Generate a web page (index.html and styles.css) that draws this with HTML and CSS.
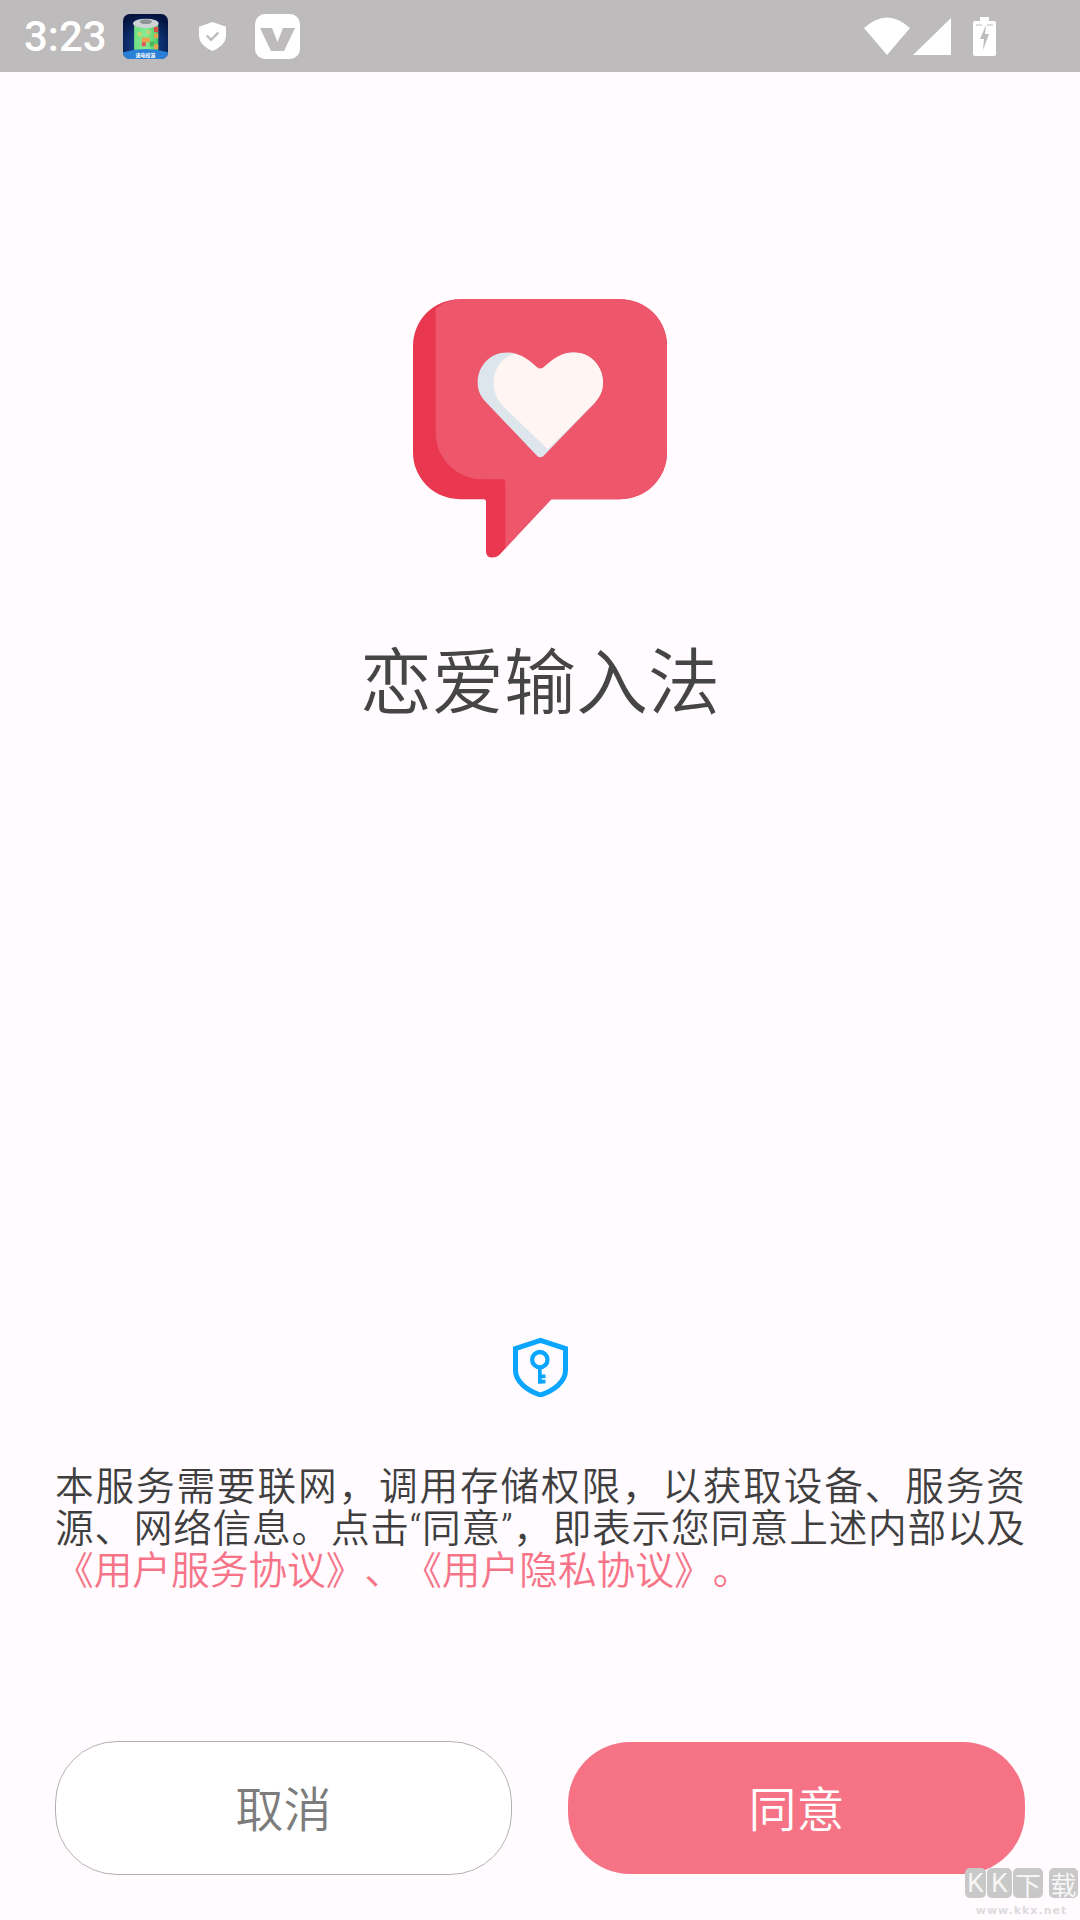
FILE: index.html
```html
<!DOCTYPE html>
<html lang="zh">
<head>
<meta charset="utf-8">
<title>恋爱输入法</title>
<link rel="stylesheet" href="styles.css">
</head>
<body>
<div class="screen">
  <header class="status">
    <span class="time">3:23</span>
    <svg class="ic-app" viewBox="370 38 134 134">
      <defs>
        <radialGradient id="bg" cx="50%" cy="70%" r="70%"><stop offset="0" stop-color="#1a4fa8"/><stop offset="1" stop-color="#04143f"/></radialGradient>
        <linearGradient id="can" x1="0" x2="1"><stop offset="0" stop-color="#6fdc80"/><stop offset=".5" stop-color="#86ec94"/><stop offset="1" stop-color="#4cc765"/></linearGradient>
        <clipPath id="appclip"><rect x="370" y="38" width="134" height="134" rx="20"/></clipPath>
      </defs>
      <g clip-path="url(#appclip)">
        <rect x="370" y="38" width="134" height="134" fill="url(#bg)"/>
        <rect x="403" y="68" width="72" height="80" rx="6" fill="url(#can)"/>
        <rect x="462" y="76" width="13" height="16" fill="#d8524a"/>
        <rect x="462" y="96" width="13" height="14" fill="#e2a24e"/>
        <rect x="426" y="108" width="24" height="14" fill="#eda14f"/>
        <rect x="426" y="122" width="12" height="12" fill="#e2585a"/>
        <rect x="450" y="120" width="14" height="14" fill="#4ab85c"/>
        <rect x="414" y="92" width="12" height="12" fill="#c9d46a"/>
        <rect x="440" y="86" width="12" height="12" fill="#c8cf75"/>
        <rect x="462" y="128" width="13" height="14" fill="#e7a64d"/>
        <ellipse cx="438" cy="66" rx="38" ry="14" fill="#cfd3d6"/>
        <ellipse cx="438" cy="61" rx="18" ry="7" fill="#8d9498"/>
        <path d="M370 152 Q437 132 504 152 V172 H370Z" fill="#2a7fd6"/>
        <text class="app-label" x="437" y="167" text-anchor="middle">速电校准</text>
      </g>
    </svg>
    <svg class="ic-shield" viewBox="0 0 28 30">
      <path d="M14 0 L28 5 V14 C28 22 21 27 14 30 C7 27 0 22 0 14 V5Z" fill="#fff"/>
      <path d="M8 14 L12.5 18.5 L20 11" fill="none" stroke="#bdbbbb" stroke-width="2.4"/>
    </svg>
    <svg class="ic-v" viewBox="0 0 45 45">
      <rect width="45" height="45" rx="10" fill="#fff"/>
      <path d="M5 14 H17 L22.5 28 L28 14 H40 L29 37 H16Z" fill="#bdbbbb"/>
    </svg>
    <div class="status-right">
      <svg class="ic-wifi" viewBox="0 0 46 38"><path d="M0 11 Q23 -10 46 11 L23 38Z" fill="#fff"/></svg>
      <svg class="ic-signal" viewBox="0 0 38 37"><path d="M38 0 V37 H0Z" fill="#fff"/></svg>
      <svg class="ic-batt" viewBox="0 0 23 39">
        <path d="M7 0 H16 V4 H21 Q23 4 23 6 V37 Q23 39 21 39 H2 Q0 39 0 37 V6 Q0 4 2 4 H7Z" fill="#fff"/>
        <path d="M3 8 H9 M14 8 H20" stroke="#bdbbbb" stroke-width="1.2"/>
        <path d="M13 8 L7 22 H11 L10 33 L16 17 H12Z" fill="#bdbbbb"/>
      </svg>
    </div>
  </header>

  <main class="main">
    <svg class="logo" viewBox="68 55 762 776">
      <path d="M208 55 H690 A140 140 0 0 1 830 195 V515 A140 140 0 0 1 690 655 H483 L326 823 Q318 830 306 830 Q287 830 287 812 V662 Q287 655 280 655 H208 A140 140 0 0 1 68 515 V195 A140 140 0 0 1 208 55Z" fill="#e8374f"/>
      <path d="M136 82 Q170 55 208 55 H690 A140 140 0 0 1 830 195 V515 A140 140 0 0 1 690 655 H483 L345 802 V602 Q345 595 338 595 H275 A139 139 0 0 1 136 456Z" fill="#ee566b"/>
      <path d="M438 258 C410 232 385 215 350 215 C300 215 262 255 262 305 C262 335 275 352 290 367 L440 525 Q450 534 460 525 L612 367 C625 352 638 335 638 305 C638 255 600 215 550 215 C515 215 490 232 462 258 Q450 270 438 258Z" fill="#dde6ec"/>
      <path d="M375 219 C340 225 310 260 310 305 C310 335 322 360 340 378 L472 505 L612 367 C625 352 638 335 638 305 C638 255 600 215 550 215 C515 215 490 232 462 258 Q450 270 438 258 C418 240 398 226 375 219Z" fill="#fff5f2"/>
    </svg>
    <h1 class="title">恋爱输入法</h1>
    <svg class="key" viewBox="65 50 170 180">
      <path d="M150 60 L225 85 V150 C225 185 190 210 150 224 C110 210 75 185 75 150 V85Z" fill="none" stroke="#0aa5ff" stroke-width="15"/>
      <circle cx="148" cy="118" r="23" fill="none" stroke="#0aa5ff" stroke-width="13"/>
      <path d="M148 140 V190 M148 168 H165 M148 184 H165" fill="none" stroke="#0aa5ff" stroke-width="11"/>
    </svg>
    <p class="notice">本服务需要联网，调用存储权限，以获取设备、服务资源、网络信息。点击“同意”，即表示您同意上述内部以及<span class="link">《用户服务协议》、《用户隐私协议》。</span></p>
    <div class="actions">
      <button class="btn btn-cancel">取消</button>
      <button class="btn btn-agree">同意</button>
    </div>
  </main>

  <div class="watermark">
    <div class="wm-logo"><span class="wm-ch wm-k1">K</span><span class="wm-ch wm-k2">K</span><span class="wm-ch wm-c1">下</span><span class="wm-ch wm-c2">载</span></div>
    <span class="wm-url">www.kkx.net</span>
  </div>
</div>
</body>
</html>
```
FILE: styles.css
```css
html, body { margin: 0; padding: 0; }
body { font-family: Roboto, "Noto Sans CJK SC", sans-serif; background: #fffbff; text-spacing-trim: space-all; }
.screen { position: relative; width: 1080px; height: 1920px; overflow: hidden; background: #fffbff; }

.status { display: flex; align-items: center; height: 72px; background: #bdbbbb; padding-left: 24px; box-sizing: border-box; }
.time { font-family: Roboto, sans-serif; font-size: 42px; font-weight: 500; color: #fff; width: 99px; }
.ic-app { width: 45px; height: 45px; }
.ic-shield { width: 27px; height: 29px; margin-left: 31px; }
.ic-v { width: 45px; height: 45px; margin-left: 29px; }
.app-label { font-size: 15px; fill: #fff; font-weight: 700; }
.status-right { display: flex; align-items: center; margin-left: auto; margin-right: 84px; }
.ic-wifi { width: 46px; height: 38px; }
.ic-signal { width: 38px; height: 37px; margin-left: 3px; }
.ic-batt { width: 23px; height: 39px; margin-left: 22px; }

.main { display: flex; flex-direction: column; align-items: center; padding-top: 227px; }
.logo { width: 254px; height: 259px; }
.title { margin: 76px 0 0; font-size: 72px; line-height: 100px; font-weight: 350; color: #454545; }
.key { width: 57px; height: 60px; margin-top: 603px; }
.notice { margin: 69px 0 0; width: 970px; font-size: 38.7px; font-weight: 350; line-height: 42px; color: #3f3f3f; text-align: justify; }
.link { color: #f77488; }

.actions { display: flex; justify-content: space-between; align-items: center; width: 970px; margin-top: 149px; }
.btn { width: 457px; font-family: inherit; font-size: 48px; font-weight: 350; padding: 0 0 4px; border-radius: 62px; }
.btn-cancel { height: 134px; background: #fff; border: 1px solid #b5b1b3; color: #7c7c7c; }
.btn-agree { height: 132px; background: #f57385; border: 0; color: #fff; }

.watermark { position: absolute; left: 965px; top: 1868px; display: flex; flex-direction: column; align-items: center; width: 113px; }
.wm-logo { display: flex; height: 30px; }
.wm-ch { display: flex; align-items: center; justify-content: center; height: 30px; border-radius: 5px; background: #c8c8c8; color: #f6f6f6; font-size: 26px; font-weight: 400; }
.wm-k1 { width: 21px; }
.wm-k2 { width: 25px; margin-left: 1px; }
.wm-c1 { width: 30px; margin-left: 1px; }
.wm-c2 { width: 29px; margin-left: 6px; }
.wm-url { margin-top: 6px; font-family: "DejaVu Sans", sans-serif; font-size: 11px; line-height: 14px; font-weight: 700; letter-spacing: 1px; color: #dcdcdc; }
```
